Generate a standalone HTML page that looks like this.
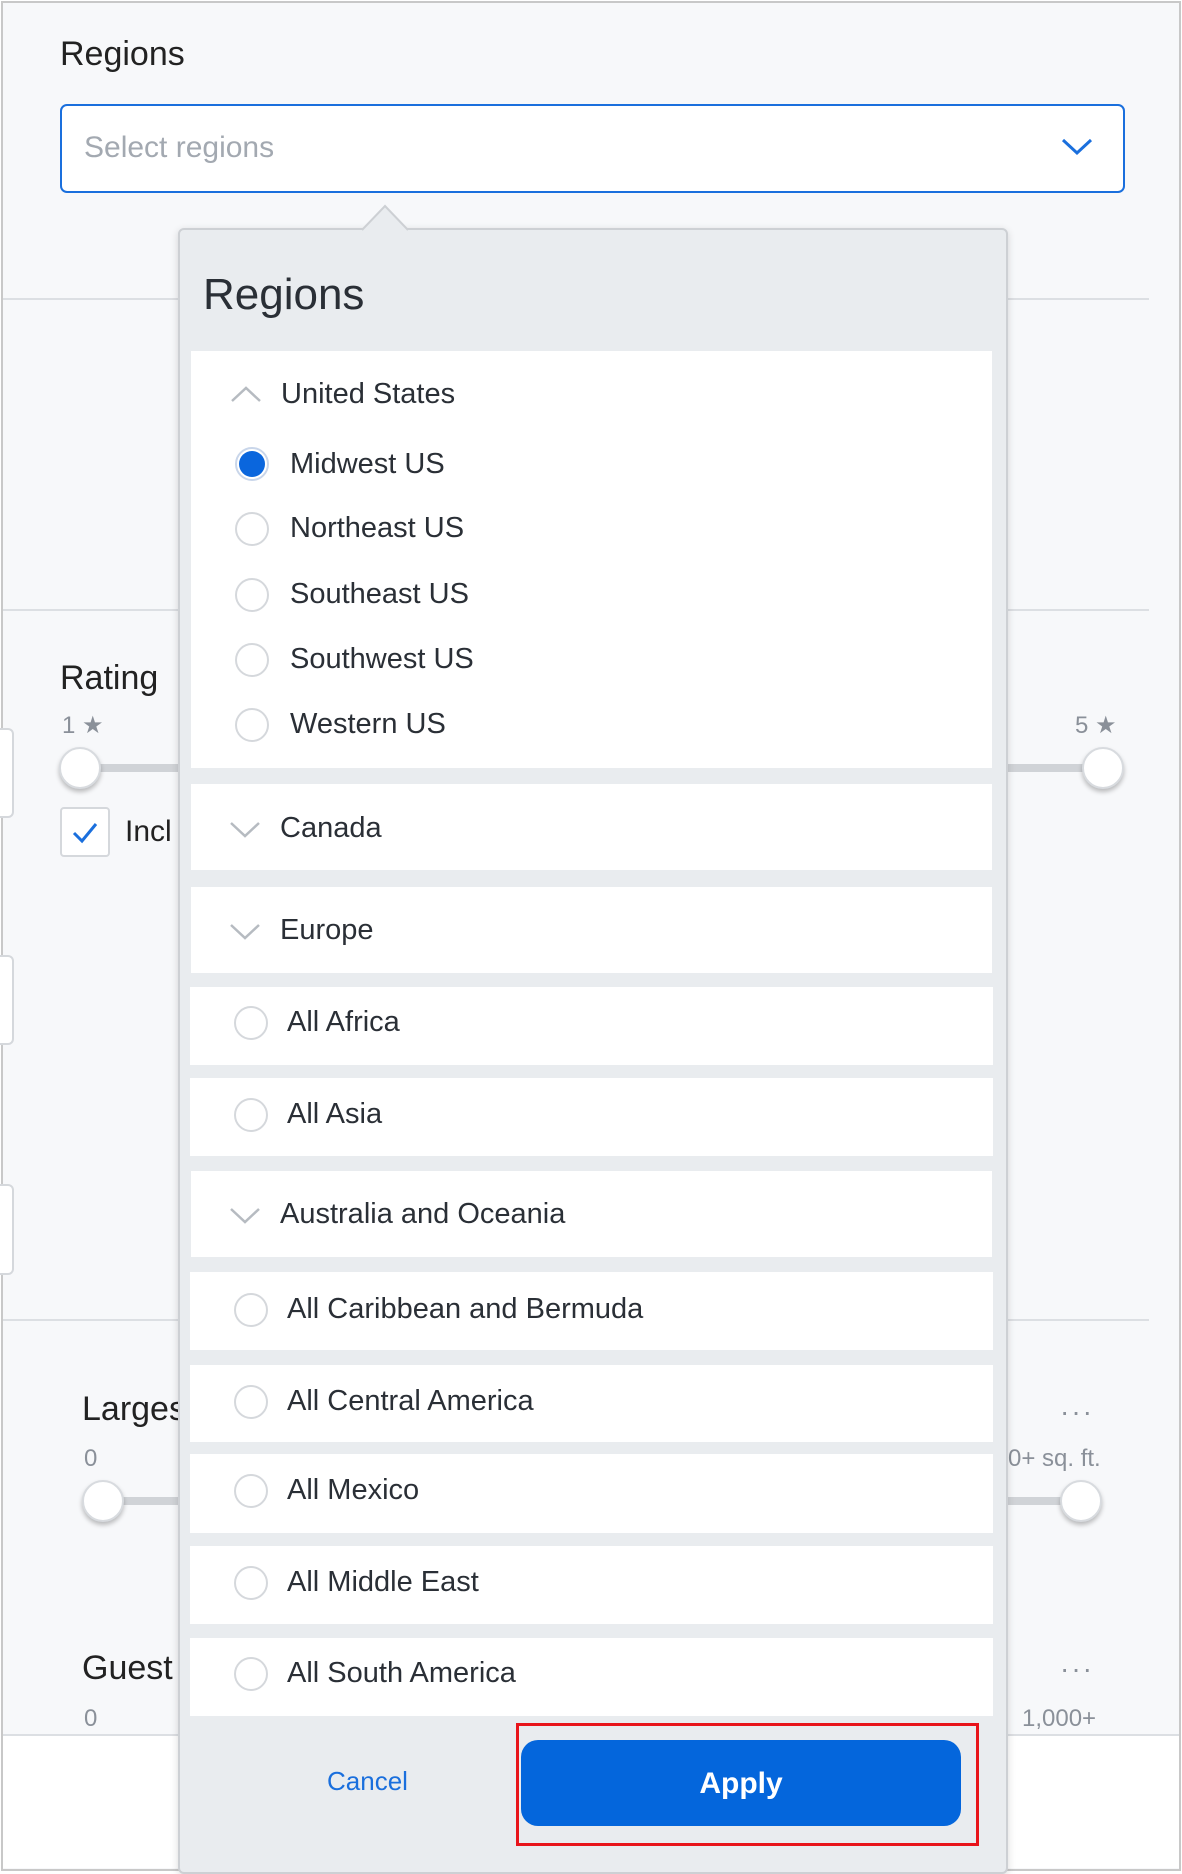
<!DOCTYPE html>
<html><head><style>
*{box-sizing:border-box;margin:0;padding:0}
body{width:1182px;height:1872px;position:relative;background:#fff;font-family:"Liberation Sans",Arial,sans-serif;overflow:hidden;color:#222}
.a{position:absolute}
.t{position:absolute;white-space:nowrap;line-height:1}
.frame{left:1px;top:1px;width:1180px;height:1870px;border:2px solid #c8c8c8;background:#f7f8fa}
.hr{position:absolute;height:2px;background:#dcdfe3;left:3px;width:1146px}
.radio{position:absolute;width:34px;height:34px;border:2px solid #d5d8dc;border-radius:50%;background:#fff}
.blk{position:absolute;left:191px;width:801px;background:#fff}
.lbl{position:absolute;font-size:29px;color:#2a2f36;white-space:nowrap;line-height:1}
.thumb{position:absolute;width:42px;height:42px;border-radius:50%;background:#fff;border:2px solid #d8dbdf;box-shadow:0 3px 5px rgba(0,0,0,.25)}
.grey{color:#8a9099}
</style></head><body>
<div class="a frame"></div>
<div class="a" style="left:3px;top:1736px;width:1176px;height:132px;background:#fff"></div>
<div class="hr" style="top:1734px;width:1176px"></div>
<div class="t" style="left:60px;top:37px;font-size:34px;color:#222">Regions</div>
<div class="a" style="left:60px;top:104px;width:1065px;height:89px;border:2px solid #1a6fdd;border-radius:7px;background:#fff"></div>
<div class="t" style="left:84px;top:133px;font-size:30px;color:#a3a9b1">Select regions</div>
<svg class="a" style="left:1060px;top:136px" width="34" height="22"><path d="M3 4 L17 17 L31 4" fill="none" stroke="#1a6fdd" stroke-width="3"/></svg>
<div class="hr" style="top:298px"></div>
<div class="hr" style="top:609px"></div>
<div class="hr" style="top:1319px"></div>
<div class="a" style="left:0;top:728px;width:14px;height:90px;border:2px solid #d5d8dc;border-left:none;border-radius:0 6px 6px 0;background:#fff"></div>
<div class="a" style="left:0;top:955px;width:14px;height:90px;border:2px solid #d5d8dc;border-left:none;border-radius:0 6px 6px 0;background:#fff"></div>
<div class="a" style="left:0;top:1184px;width:14px;height:91px;border:2px solid #d5d8dc;border-left:none;border-radius:0 6px 6px 0;background:#fff"></div>
<div class="t" style="left:60px;top:661px;font-size:34px">Rating</div>
<div class="t grey" style="left:62px;top:714px;font-size:24px">1 ★</div>
<div class="t grey" style="left:1075px;top:714px;font-size:24px">5 ★</div>
<div class="a" style="left:80px;top:764px;width:1030px;height:8px;background:#d0d3d7;border-radius:4px"></div>
<div class="thumb" style="left:59px;top:747px"></div>
<div class="thumb" style="left:1082px;top:747px"></div>
<div class="a" style="left:60px;top:807px;width:50px;height:50px;border:2px solid #d5d8dc;border-radius:4px;background:#fff"></div>
<svg class="a" style="left:68px;top:815px" width="34" height="34"><path d="M6 18 L14 26 L28 9" fill="none" stroke="#1a6fdd" stroke-width="3"/></svg>
<div class="t" style="left:125px;top:817px;font-size:30px">Incl</div>
<div class="t" style="left:82px;top:1392px;font-size:34px">Larges</div>
<div class="t grey" style="left:84px;top:1447px;font-size:24px">0</div>
<div class="t grey" style="left:1008px;top:1447px;font-size:24px">0+ sq. ft.</div>
<div class="t grey" style="left:1060px;top:1398px;font-size:28px;letter-spacing:2px">···</div>
<div class="a" style="left:103px;top:1497px;width:980px;height:8px;background:#d0d3d7;border-radius:4px"></div>
<div class="thumb" style="left:82px;top:1480px"></div>
<div class="thumb" style="left:1060px;top:1480px"></div>
<div class="t" style="left:82px;top:1651px;font-size:34px">Guest</div>
<div class="t grey" style="left:84px;top:1707px;font-size:24px">0</div>
<div class="t grey" style="left:1022px;top:1707px;font-size:24px">1,000+</div>
<div class="t grey" style="left:1060px;top:1655px;font-size:28px;letter-spacing:2px">···</div>
<div class="a" style="left:178px;top:228px;width:830px;height:1646px;background:#e9ecef;border:2px solid #cdd0d4;border-radius:6px;box-shadow:0 2px 8px rgba(0,0,0,.15)"></div>
<svg class="a" style="left:362px;top:203px" width="46" height="28"><path d="M0 27 L23 3 L46 27" fill="#e9ecef" stroke="#cdd0d4" stroke-width="2"/></svg>
<div class="t" style="left:203px;top:273px;font-size:44px;color:#2a2f36">Regions</div>
<div class="blk" style="top:351px;height:417px"></div>
<svg class="a" style="left:230px;top:384px" width="32" height="20"><path d="M2 17 L16 4 L30 17" fill="none" stroke="#b6bbc1" stroke-width="2.5"/></svg>
<div class="lbl" style="left:281px;top:380px">United States</div>
<div class="radio" style="left:235px;top:447px;border-color:#c9d6ea"></div>
<div class="a" style="left:239px;top:451px;width:26px;height:26px;border-radius:50%;background:#0a66dd"></div>
<div class="lbl" style="left:290px;top:450px">Midwest US</div>
<div class="radio" style="left:235px;top:512px"></div><div class="lbl" style="left:290px;top:514px">Northeast US</div>
<div class="radio" style="left:235px;top:578px"></div><div class="lbl" style="left:290px;top:580px">Southeast US</div>
<div class="radio" style="left:235px;top:643px"></div><div class="lbl" style="left:290px;top:645px">Southwest US</div>
<div class="radio" style="left:235px;top:708px"></div><div class="lbl" style="left:290px;top:710px">Western US</div>
<div class="blk" style="top:784px;height:86px"></div>
<svg class="a" style="left:229px;top:820px" width="32" height="20"><path d="M2 3 L16 16 L30 3" fill="none" stroke="#b6bbc1" stroke-width="2.5"/></svg>
<div class="lbl" style="left:280px;top:814px">Canada</div>
<div class="blk" style="top:887px;height:86px"></div>
<svg class="a" style="left:229px;top:922px" width="32" height="20"><path d="M2 3 L16 16 L30 3" fill="none" stroke="#b6bbc1" stroke-width="2.5"/></svg>
<div class="lbl" style="left:280px;top:916px">Europe</div>
<div class="blk" style="left:190px;width:803px;top:987px;height:78px"></div>
<div class="radio" style="left:234px;top:1006px"></div><div class="lbl" style="left:287px;top:1008px">All Africa</div>
<div class="blk" style="left:190px;width:803px;top:1078px;height:78px"></div>
<div class="radio" style="left:234px;top:1098px"></div><div class="lbl" style="left:287px;top:1100px">All Asia</div>
<div class="blk" style="top:1171px;height:86px"></div>
<svg class="a" style="left:229px;top:1206px" width="32" height="20"><path d="M2 3 L16 16 L30 3" fill="none" stroke="#b6bbc1" stroke-width="2.5"/></svg>
<div class="lbl" style="left:280px;top:1200px">Australia and Oceania</div>
<div class="blk" style="left:190px;width:803px;top:1272px;height:78px"></div>
<div class="radio" style="left:234px;top:1293px"></div><div class="lbl" style="left:287px;top:1295px">All Caribbean and Bermuda</div>
<div class="blk" style="left:190px;width:803px;top:1365px;height:77px"></div>
<div class="radio" style="left:234px;top:1385px"></div><div class="lbl" style="left:287px;top:1387px">All Central America</div>
<div class="blk" style="left:190px;width:803px;top:1454px;height:79px"></div>
<div class="radio" style="left:234px;top:1474px"></div><div class="lbl" style="left:287px;top:1476px">All Mexico</div>
<div class="blk" style="left:190px;width:803px;top:1546px;height:78px"></div>
<div class="radio" style="left:234px;top:1566px"></div><div class="lbl" style="left:287px;top:1568px">All Middle East</div>
<div class="blk" style="left:190px;width:803px;top:1638px;height:78px"></div>
<div class="radio" style="left:234px;top:1657px"></div><div class="lbl" style="left:287px;top:1659px">All South America</div>
<div class="t" style="left:327px;top:1768px;font-size:26px;color:#1a6fdd">Cancel</div>
<div class="a" style="left:516px;top:1723px;width:463px;height:123px;border:3px solid #e8141b"></div>
<div class="a" style="left:521px;top:1740px;width:440px;height:86px;background:#0466dc;border-radius:17px"></div>
<div class="t" style="left:521px;top:1769px;width:440px;text-align:center;font-size:30px;font-weight:bold;color:#fff">Apply</div>
</body></html>
